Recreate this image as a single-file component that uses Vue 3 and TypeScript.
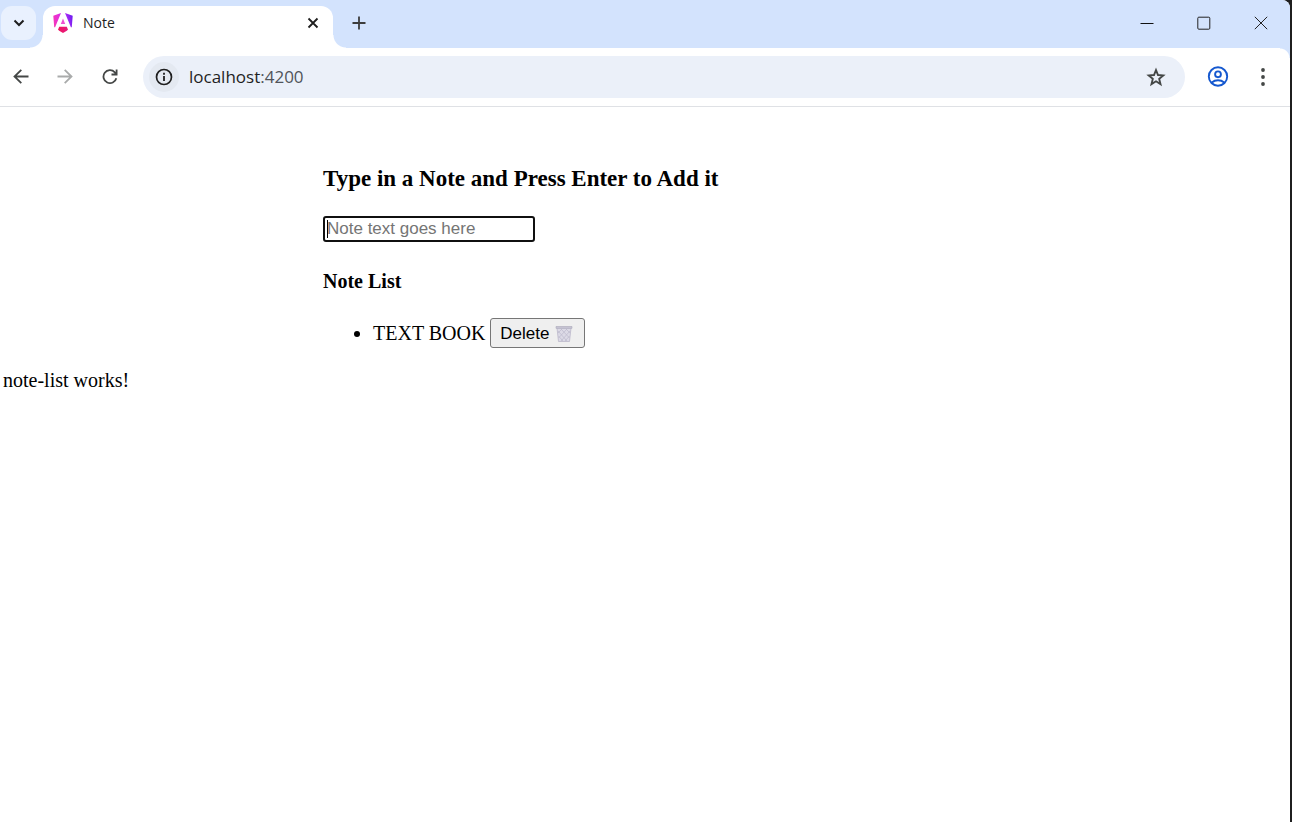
<script setup lang="ts">
import { ref } from 'vue'

interface Note {
  id: number
  text: string
}

const draft = ref('')
const notes = ref<Note[]>([{ id: 1, text: 'TEXT BOOK' }])

function addNote(): void {
  const text = draft.value.trim()
  if (!text) return
  notes.value.push({ id: Date.now(), text })
  draft.value = ''
}

function removeNote(id: number): void {
  notes.value = notes.value.filter((note) => note.id !== id)
}
</script>

<template>
  <div class="desktop">
    <div class="window">
      <header class="tab-strip">
        <button class="tab-search" aria-label="Search tabs">
          <svg width="12" height="8" viewBox="0 0 12 8"><path d="M1.500 1.500 6 6l4.500-4.500" fill="none" stroke="#1f1f1f" stroke-width="2" /></svg>
        </button>
        <div class="tab">
          <svg width="20" height="22" viewBox="0 0 20 22" aria-hidden="true">
            <defs>
              <linearGradient id="side" gradientUnits="userSpaceOnUse" x1="0" y1="10" x2="20" y2="6">
                <stop offset="0" stop-color="#f637b5" />
                <stop offset=".35" stop-color="#e22ee0" />
                <stop offset=".65" stop-color="#b12df5" />
                <stop offset="1" stop-color="#6a1cf0" />
              </linearGradient>
              <linearGradient id="foot" x1="0" y1="0" x2="1" y2="0">
                <stop offset="0" stop-color="#f0145f" />
                <stop offset="1" stop-color="#e51a80" />
              </linearGradient>
            </defs>
            <path d="M8 1 2 15.500 1.200 15 .3 3.800zM12 1l7.700 2.800-.9 11.200-.8.500z" fill="url(#side)" />
            <path d="M10 6.500 12.200 12H7.800z" fill="#ee4fd2" />
            <path d="M6.200 14.800h7.600l1 2.400-.6 1.300L10 21l-4.200-2.500-.6-1.300z" fill="url(#foot)" />
          </svg>
          <span class="tab-title">Note</span>
          <button class="tab-close" aria-label="Close tab">
            <svg width="12" height="12" viewBox="0 0 12 12"><path d="m1.500 1.500 9 9m0-9-9 9" stroke="#1f1f1f" stroke-width="1.800" /></svg>
          </button>
        </div>
        <button class="new-tab" aria-label="New tab">
          <svg width="14" height="14" viewBox="0 0 14 14"><path d="M7 .5v13M.5 7h13" stroke="#3c3c3c" stroke-width="1.800" /></svg>
        </button>
        <div class="window-controls">
          <button aria-label="Minimize">
            <svg width="14" height="14" viewBox="0 0 14 14"><path d="M.5 7.500h13" stroke="#111" /></svg>
          </button>
          <button aria-label="Maximize">
            <svg width="14" height="14" viewBox="0 0 14 14"><rect x=".8" y="1.200" width="12" height="12" rx="1" fill="none" stroke="#222" /></svg>
          </button>
          <button aria-label="Close">
            <svg width="14" height="14" viewBox="0 0 14 14"><path d="m.8.8 12.400 12.400m0-12.400L.8 13.200" stroke="#222" /></svg>
          </button>
        </div>
      </header>

      <nav class="toolbar" aria-label="Browser toolbar">
        <div class="nav-buttons">
          <button aria-label="Back">
            <svg width="16" height="16" viewBox="0 0 16 16"><path d="M15.500 7.500h-14M8.300.8 1.500 7.500l6.800 6.700" fill="none" stroke="#444746" stroke-width="1.800" /></svg>
          </button>
          <button aria-label="Forward" disabled>
            <svg width="16" height="16" viewBox="0 0 16 16"><path d="M.5 7.500h14M7.700.8l6.800 6.700-6.800 6.700" fill="none" stroke="#a9abab" stroke-width="1.800" /></svg>
          </button>
          <button aria-label="Reload">
            <svg width="16" height="16" viewBox="0 0 16 16"><path d="M14.300 9.200A6.500 6.500 0 1 1 12.800 3.300L14.300 5M14.600.5v5H9.500" fill="none" stroke="#444746" stroke-width="1.800" /></svg>
          </button>
        </div>
        <div class="address-bar">
          <button class="site-info" aria-label="View site information">
            <svg width="18" height="18" viewBox="0 0 18 18"><circle cx="9" cy="9" r="7.500" fill="none" stroke="#1f1f1f" stroke-width="1.700" /><path d="M9 8v5M9 4.800v1.900" stroke="#1f1f1f" stroke-width="1.800" /></svg>
          </button>
          <span class="url">localhost<span class="port">:4200</span></span>
          <button class="bookmark" aria-label="Bookmark this tab">
            <svg width="20" height="20" viewBox="0 0 20 20"><path d="m10 3 2 5 5.300.4-4.100 3.500 1.300 5.200-4.500-2.800-4.500 2.800 1.300-5.200-4.100-3.500L8 8z" fill="none" stroke="#444746" stroke-width="1.900" /></svg>
          </button>
        </div>
        <button class="profile" aria-label="Profile">
          <svg width="22" height="22" viewBox="0 0 22 22"><g fill="none" stroke="#1558cf" stroke-width="1.900"><circle cx="11" cy="10.500" r="9.200" /><circle cx="11" cy="8.300" r="2.900" /><path d="M4.800 16.500c3.600-3 8.800-3 12.400 0" /></g></svg>
        </button>
        <button class="menu" aria-label="Menu">
          <svg width="4" height="18" viewBox="0 0 4 18"><g fill="#444746"><circle cx="2" cy="2" r="1.900" /><circle cx="2" cy="9" r="1.900" /><circle cx="2" cy="16" r="1.900" /></g></svg>
        </button>
      </nav>

      <main class="page">
        <section class="notes">
          <h3><label for="note-text">Type in a Note and Press Enter to Add it</label></h3>
          <div class="field">
            <input id="note-text" v-model="draft" type="text" placeholder="Note text goes here" @keyup.enter="addNote" />
            <span class="caret" aria-hidden="true"></span>
          </div>
          <h4>Note List</h4>
          <ul>
            <li v-for="note in notes" :key="note.id">
              <div class="note-row">
                <span>{{ note.text }}</span>
                <button class="delete" @click="removeNote(note.id)">
                  Delete
                  <svg width="18" height="18" viewBox="0 0 18 18" aria-hidden="true">
                    <path d="M2 3h14l-1.500 13.500h-11z" fill="#dcdae6" stroke="#bbb8ca" stroke-width=".8" />
                    <path d="m3 6 9 10M6 4l8.500 9M11 4l4 4M3.500 11l4.500 5M15 6l-9 10M12 4l-8.500 9M7 4 3 8M14.500 11 10 16" stroke="#bcb9cc" stroke-width=".7" />
                    <path d="M1 1.500h16v1.800H1z" fill="#c9c6d5" stroke="#aaa7b8" stroke-width=".6" />
                  </svg>
                </button>
              </div>
            </li>
          </ul>
        </section>
        <p class="status">note-list works!</p>
      </main>
    </div>
  </div>
</template>

<style>
body {
  margin: 0;
}
</style>

<style scoped>
* {
  box-sizing: border-box;
}

svg {
  display: block;
}

button {
  display: flex;
  align-items: center;
  justify-content: center;
  padding: 0;
  border: 0;
  background: none;
}

.desktop {
  min-height: 100vh;
  display: flex;
  background: #1f1f1f;
  padding-right: 2px;
}

.window {
  flex: 1;
  min-width: 0;
  background: #fff;
  border-top-right-radius: 8px;
  overflow: hidden;
  font-family: "Open Sans", "Noto Sans", sans-serif;
}

.tab-strip {
  display: flex;
  align-items: flex-start;
  height: 48px;
  padding: 0 1px;
  background: #d3e3fd;
}

.tab-search {
  width: 35px;
  height: 34px;
  margin-top: 6px;
  border-radius: 11px;
  background: #e9f1fe;
}

.tab {
  position: relative;
  display: flex;
  align-items: center;
  width: 290px;
  height: 42px;
  margin: 6px 0 0 7px;
  padding: 0 14px 8px 10px;
  border-radius: 12px 12px 0 0;
  background: #fff;
}

.tab::before,
.tab::after {
  content: "";
  position: absolute;
  bottom: 0;
  width: 13px;
  height: 13px;
}

.tab::before {
  right: 100%;
  background: radial-gradient(circle at 0 0, transparent 12px, #fff 13px);
}

.tab::after {
  left: 100%;
  background: radial-gradient(circle at 100% 0, transparent 12px, #fff 13px);
}

.tab-title {
  flex: 1;
  padding-left: 10px;
  font-size: 14px;
  line-height: 20px;
  color: #1f1f1f;
}

.new-tab {
  width: 34px;
  height: 34px;
  margin: 6px 0 0 9px;
}

.window-controls {
  display: flex;
  margin-left: auto;
}

.window-controls button {
  width: 57px;
  height: 46px;
}

.toolbar {
  display: flex;
  align-items: center;
  height: 59px;
  border-bottom: 1px solid #dfe1e5;
  background: #fff;
  position: relative;
}

.toolbar::after {
  content: "";
  position: absolute;
  top: 0;
  right: 0;
  width: 10px;
  height: 10px;
  background: radial-gradient(circle at 0 100%, transparent 9px, #d3e3fd 10px);
}

.nav-buttons {
  display: flex;
  margin-right: 11px;
}

.nav-buttons button {
  width: 45px;
  height: 42px;
}

.nav-buttons button:first-child {
  width: 42px;
}

.address-bar {
  flex: 1;
  display: flex;
  align-items: center;
  height: 42px;
  padding: 0 14px 0 6px;
  border-radius: 21px;
  background: #ebf0f9;
}

.site-info {
  width: 30px;
  height: 30px;
  border-radius: 50%;
  background: #e4e9f1;
}

.url {
  flex: 1;
  padding-left: 10px;
  font-size: 17px;
  line-height: 24px;
  color: #1f1f1f;
}

.port {
  color: #50545a;
}

.bookmark {
  width: 30px;
  height: 30px;
}

.profile {
  width: 42px;
  height: 42px;
  margin-left: 12px;
}

.menu {
  width: 42px;
  height: 42px;
  margin: 0 6px 0 3px;
}

.page {
  padding: 60px 3px 0;
  font-family: "Liberation Serif", "Times New Roman", serif;
  font-size: 20px;
  line-height: 24px;
  color: #000;
}

.notes {
  padding-left: 320px;
  padding-left: calc(25% - 1px);
}

h3 {
  margin: 0 0 25px;
  font-size: 23px;
  line-height: 24px;
}

.field {
  position: relative;
  width: 212px;
}

input {
  display: block;
  width: 100%;
  height: 26px;
  padding: 0 2px;
  border: 2px solid #101010;
  border-radius: 3px;
  outline: none;
  background: #fff;
  font-family: "Liberation Sans", Arial, sans-serif;
  font-size: 17px;
  color: #000;
}

input::placeholder {
  color: #757575;
  opacity: 1;
}

.caret {
  position: absolute;
  left: 4px;
  top: 4px;
  width: 1px;
  height: 18px;
  background: #000;
}

h4 {
  margin: 27px 0 25px;
  font-size: 20px;
  line-height: 24px;
}

ul {
  margin: 0;
  padding-left: 50px;
}

.note-row {
  display: flex;
  align-items: center;
  gap: 5px;
}

.delete {
  width: 95px;
  height: 30px;
  padding: 2px 2px 0 0;
  gap: 6px;
  border: 1px solid #767676;
  border-radius: 3px;
  background: #efefef;
  font-family: "Liberation Sans", Arial, sans-serif;
  font-size: 17px;
  color: #000;
}

.status {
  margin: 20px 0;
}
</style>
